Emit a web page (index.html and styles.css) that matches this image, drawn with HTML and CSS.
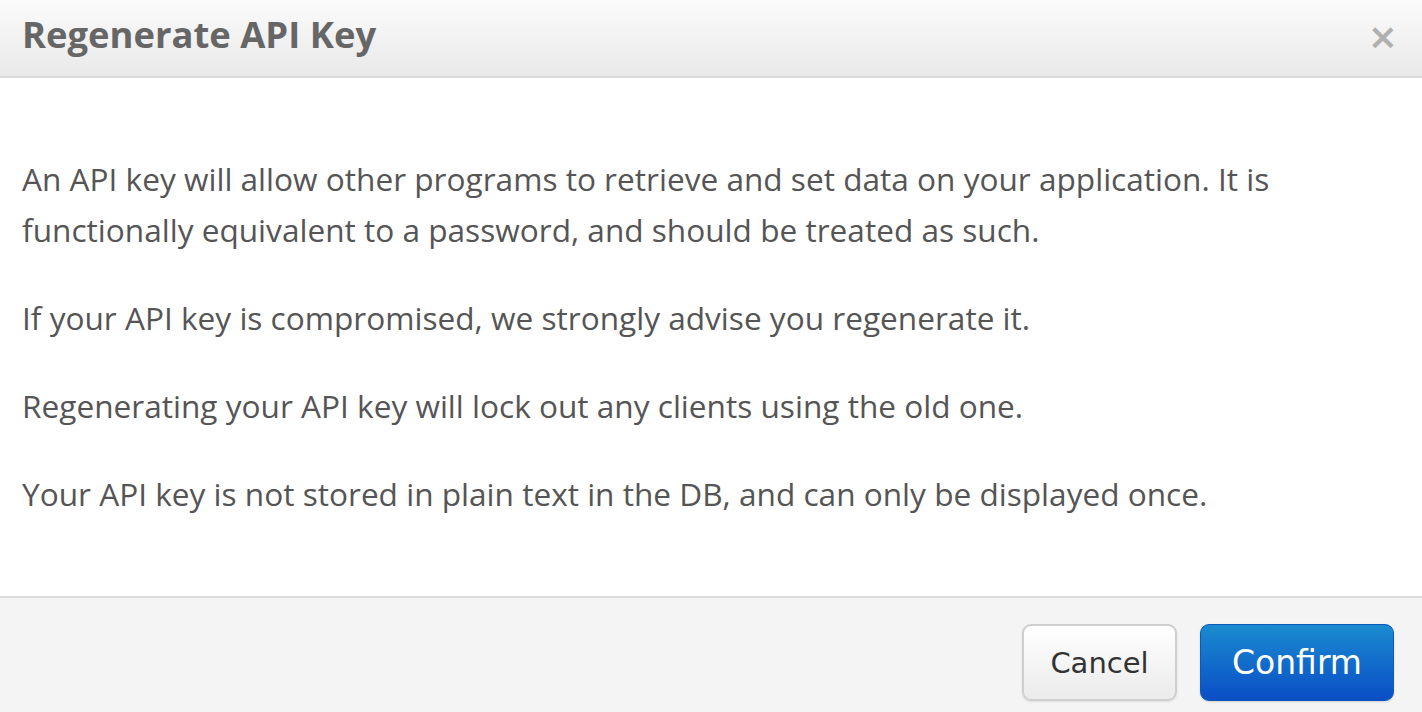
FILE: index.html
```html
<!DOCTYPE html>
<html>
<head>
<meta charset="utf-8">
<link rel="stylesheet" href="styles.css">
</head>
<body>
<div class="modal">
  <div class="modal-header">
    <h3 class="modal-title">Regenerate API Key</h3>
    <span class="close">&times;</span>
  </div>
  <div class="modal-body">
    <p>An API key will allow other programs to retrieve and set data on your application. It is functionally equivalent to a password, and should be treated as such.</p>
    <p>If your API key is compromised, we strongly advise you regenerate it.</p>
    <p>Regenerating your API key will lock out any clients using the old one.</p>
    <p>Your API key is not stored in plain text in the DB, and can only be displayed once.</p>
  </div>
  <div class="modal-footer">
    <button class="btn btn-cancel">Cancel</button>
    <button class="btn btn-confirm">Confirm</button>
  </div>
</div>
</body>
</html>
```
FILE: styles.css
```css
html, body {
  margin: 0;
  padding: 0;
  background: #ffffff;
}
body {
  width: 1422px;
  height: 712px;
  overflow: hidden;
  font-family: "Open Sans", "Liberation Sans", sans-serif;
}
.modal {
  display: flex;
  flex-direction: column;
  height: 712px;
}
.modal-header {
  height: 76px;
  display: flex;
  align-items: center;
  justify-content: space-between;
  padding: 0 24px 0 22px;
  background: linear-gradient(to bottom, #fbfbfb 0%, #e9e9e9 100%);
  border-bottom: 2px solid #dadada;
  flex: none;
}
.modal-title {
  margin: 0;
  font-size: 36.4px;
  font-weight: 700;
  color: #666666;
  line-height: 1;
  padding-bottom: 8px;
}
.close {
  font-family: "DejaVu Sans", sans-serif;
  font-size: 36px;
  font-weight: 700;
  color: #b0b0b0;
  line-height: 1;
  padding-bottom: 2px;
}
.modal-body {
  padding: 75px 22px 77px 22px;
  background: #ffffff;
  flex: none;
}
.modal-body p {
  margin: 0 0 37px 0;
  font-size: 31.6px;
  line-height: 51px;
  color: #555555;
}
.modal-body p:last-child {
  margin-bottom: 0;
}
.modal-footer {
  flex: 1;
  border-top: 2px solid #dddddd;
  background: #f4f4f4;
  display: flex;
  justify-content: flex-end;
  align-items: flex-start;
  gap: 23px;
  padding: 26px 28px 0 0;
}
.btn {
  height: 77px;
  border-radius: 9px;
  font-family: "DejaVu Sans", "Open Sans", sans-serif;
  cursor: pointer;
}
.btn-cancel {
  width: 155px;
  border: 2px solid #cfcfcf;
  background: linear-gradient(to bottom, #ffffff 0%, #ebebeb 100%);
  color: #333333;
  font-size: 29px;
  box-shadow: 0 1px 2px rgba(0,0,0,0.1);
}
.btn-confirm {
  width: 194px;
  border: 1px solid #0e58b8;
  background: linear-gradient(to bottom, #1a8bd0 0%, #0a4ec6 100%);
  color: #ffffff;
  font-size: 33px;
  box-shadow: 0 1px 2px rgba(0,0,0,0.15);
}
```
